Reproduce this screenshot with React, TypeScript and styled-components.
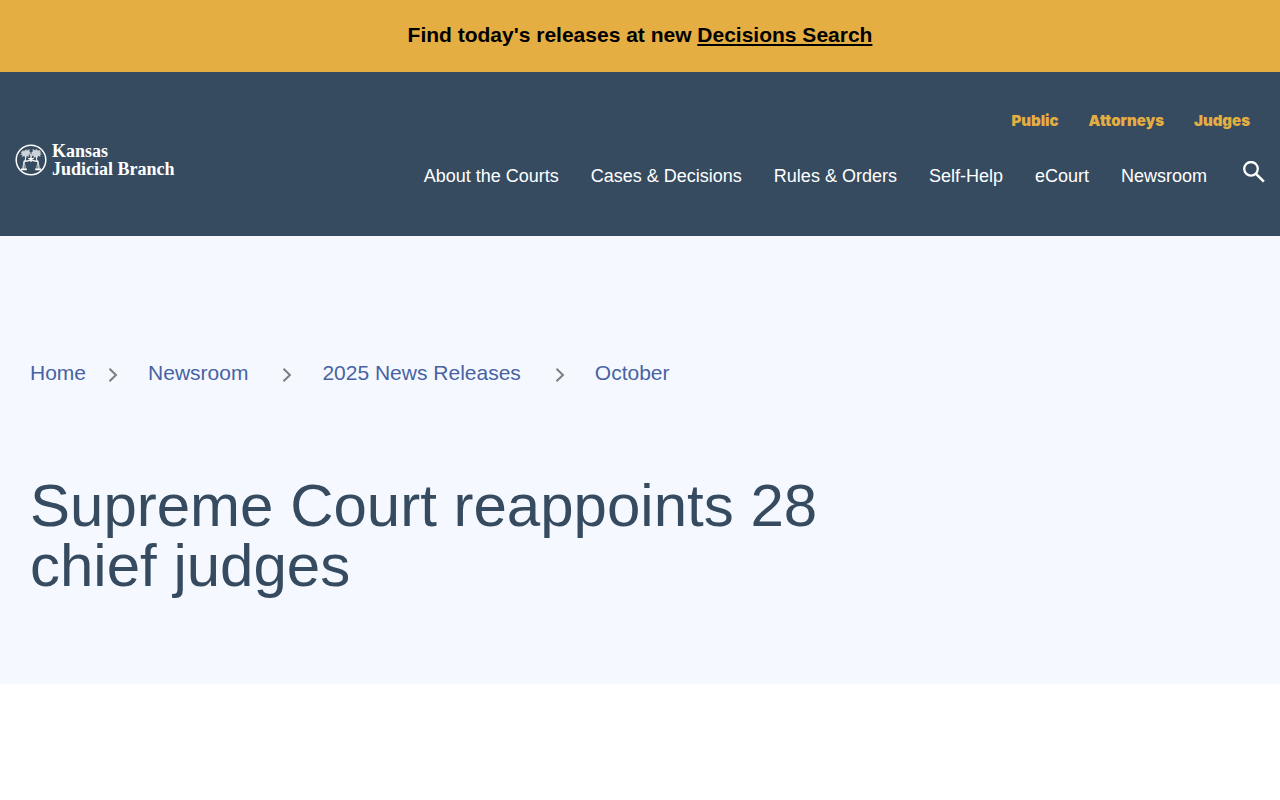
import React from "react";
import styled, { createGlobalStyle } from "styled-components";

const GlobalStyle = createGlobalStyle`
  *, *::before, *::after { box-sizing: border-box; }
  body {
    margin: 0;
    background: #ffffff;
    color: #364b5f;
    font-family: "Liberation Sans", Arial, sans-serif;
  }
`;

const Banner = styled.aside`
  padding: 20px 16px 22px;
  background: #e5ae42;
  color: #000000;
  font-size: 21px;
  font-weight: 700;
  line-height: 30px;
  text-align: center;
`;

const BannerLink = styled.a`
  color: inherit;
  text-decoration: underline;
  text-decoration-thickness: 2px;
  text-underline-offset: 2px;
`;

const Header = styled.header`
  display: flex;
  align-items: center;
  justify-content: space-between;
  gap: 24px;
  padding: 36px 15px 46px;
  background: #364b5f;
`;

const Brand = styled.a`
  display: flex;
  align-items: center;
  gap: 5px;
  padding-top: 22px;
  color: #ffffff;
  text-decoration: none;
`;

const BrandName = styled.span`
  font-family: "Liberation Serif", "Times New Roman", serif;
  font-size: 18px;
  font-weight: 700;
  line-height: 18px;
  white-space: nowrap;
`;

const BrandLine = styled.span`
  display: block;
`;

const Menus = styled.div`
  display: flex;
  flex-direction: column;
  align-items: flex-end;
  gap: 20px;
`;

const AudienceNav = styled.nav`
  display: flex;
  gap: 30px;
  padding-right: 15px;
`;

const AudienceLink = styled.a`
  color: #e5ae42;
  font-family: Inter, "Liberation Sans", sans-serif;
  font-size: 15px;
  font-weight: 900;
  line-height: 26px;
  text-decoration: none;
`;

const MainNav = styled.nav`
  display: flex;
  align-items: center;
  gap: 32px;
`;

const MainLink = styled.a`
  padding-top: 8px;
  color: #ffffff;
  font-size: 18px;
  line-height: 28px;
  text-decoration: none;
  white-space: nowrap;
`;

const SearchButton = styled.button`
  display: flex;
  margin-left: 4px;
  padding: 0;
  border: 0;
  background: none;
  color: #ffffff;
  cursor: pointer;
`;

const Hero = styled.main`
  padding: 122px 30px 88px;
  background: #f5f9ff;
`;

const Crumbs = styled.ol`
  display: flex;
  flex-wrap: wrap;
  margin: 0 0 88px;
  padding: 0;
  list-style: none;
`;

const Crumb = styled.li<{ $first?: boolean }>`
  display: flex;
  align-items: center;
  font-size: 21px;
  line-height: 30px;

  svg {
    margin: 4px 30px 0 ${(p) => (p.$first ? "22px" : "34px")};
  }
`;

const CrumbLink = styled.a`
  color: #4862a3;
  text-decoration: none;
`;

const Title = styled.h1`
  max-width: 820px;
  margin: 0;
  color: #364b5f;
  font-size: 60px;
  font-weight: 400;
  line-height: 60px;
`;

const Seal = () => (
  <svg width="32" height="32" viewBox="0 0 32 32" fill="none" stroke="currentColor" aria-hidden="true">
    <circle cx="16" cy="16" r="14.8" strokeWidth="1.5" />
    <g fill="currentColor" stroke="none" opacity=".75">
      <path d="M5.6 8.6 8.4 6l.2 1.4L11.4 5l.2 1.8L14.6 5l-.2 2.6 1.6.6-1.4 1 1.2 2-2.2-.6.2 2.6-2.2-1.4-1.4 2.4-.8-2.2-2.8 1 1-2-2.6-.4 2.2-1.4z" />
      <path d="m16.4 8.2 1.4-.6-.2-2.6 3 1.6.2-1.8 2.8 2.2.2-1.4 2.6 2.8-1.8.4 2.4 1.6-2.2.4 1 2-2.8-.8-.6 2.2-1.8-1.8-1.8 1.8-.4-2.6-2.4.8 1.2-2z" />
    </g>
    <path d="M16 9.5v8.5M8.7 17.2c3 .2 5-.2 7.3-1.5 2.3 1.3 4.3 1.7 7.3 1.5M13.2 14.6h5.6" strokeWidth="1.3" />
    <path d="M9 17.2 8.8 25M23 17.2l.2 7.8M11 12.2l-1 5M21 12.2l1 5" strokeWidth="1" />
    <path d="M9 18l-2 7M9 18l2 7M23 18l-2 7M23 18l2 7" strokeWidth=".5" />
    <path d="M6 25.4h5.8M20.2 25.4H26" strokeWidth="1.7" />
  </svg>
);

const SearchIcon = () => (
  <svg width="22" height="22" viewBox="0 0 22 22" fill="none" stroke="currentColor" aria-hidden="true">
    <circle cx="8" cy="7.8" r="6.8" strokeWidth="2.3" />
    <path d="m13 12.8 7.9 7.9" strokeWidth="2.5" />
  </svg>
);

const Chevron = () => (
  <svg width="10" height="14" viewBox="0 0 10 14" fill="none" stroke="#808080" aria-hidden="true">
    <path d="m1.5.8 6.4 6.2-6.4 6.2" strokeWidth="2.1" />
  </svg>
);

const audiences = ["Public", "Attorneys", "Judges"];
const sections = ["About the Courts", "Cases & Decisions", "Rules & Orders", "Self-Help", "eCourt", "Newsroom"];
const crumbs = ["Home", "Newsroom", "2025 News Releases", "October"];

export default function App() {
  return (
    <>
      <GlobalStyle />
      <Banner>
        Find today's releases at new <BannerLink href="#decisions">Decisions Search</BannerLink>
      </Banner>
      <Header>
        <Brand href="#home">
          <Seal />
          <BrandName>
            <BrandLine>Kansas</BrandLine>
            <BrandLine>Judicial Branch</BrandLine>
          </BrandName>
        </Brand>
        <Menus>
          <AudienceNav aria-label="Audiences">
            {audiences.map((name) => (
              <AudienceLink key={name} href="#audience">{name}</AudienceLink>
            ))}
          </AudienceNav>
          <MainNav aria-label="Main">
            {sections.map((name) => (
              <MainLink key={name} href="#section">{name}</MainLink>
            ))}
            <SearchButton type="button" aria-label="Search">
              <SearchIcon />
            </SearchButton>
          </MainNav>
        </Menus>
      </Header>
      <Hero>
        <nav aria-label="Breadcrumb">
          <Crumbs>
            {crumbs.map((name, i) => (
              <Crumb key={name} $first={i === 0}>
                <CrumbLink href="#crumb">{name}</CrumbLink>
                {i < crumbs.length - 1 && <Chevron />}
              </Crumb>
            ))}
          </Crumbs>
        </nav>
        <Title>Supreme Court reappoints 28 chief judges</Title>
      </Hero>
    </>
  );
}
